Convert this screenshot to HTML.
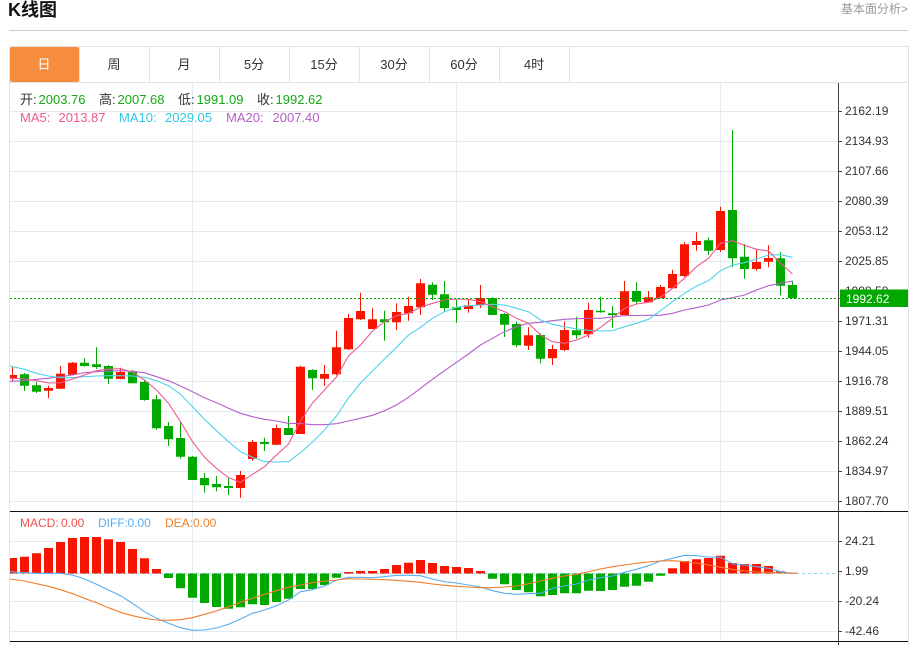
<!DOCTYPE html>
<html><head><meta charset="utf-8"><title>K线图</title>
<style>
html,body{margin:0;padding:0;background:#fff;width:917px;height:645px;overflow:hidden}
svg{display:block}
text{font-family:"Liberation Sans","Noto Sans CJK SC",sans-serif}
</style></head><body>
<svg width="917" height="645" viewBox="0 0 917 645" xmlns="http://www.w3.org/2000/svg">
<defs><clipPath id="c"><rect x="10" y="83" width="828" height="562"/></clipPath></defs>
<text x="8" y="16" font-size="18" font-weight="700" fill="#111">K线图</text>
<text x="841" y="13" font-size="12" fill="#999">基本面分析&gt;</text>
<rect x="9" y="30" width="899" height="1" fill="#ccc"/>
<!-- frame -->
<rect x="9" y="46" width="1" height="599" fill="#e2e2e2"/>
<rect x="908" y="46" width="1" height="599" fill="#e2e2e2"/>
<rect x="9" y="46" width="900" height="1" fill="#e2e2e2"/>
<rect x="9" y="82" width="900" height="1" fill="#e2e2e2"/>
<!-- tabs -->
<rect x="10" y="47" width="69" height="35" rx="2" fill="#f68c3e"/>
<g fill="#e2e2e2"><rect x="79" y="47" width="1" height="35"/><rect x="149" y="47" width="1" height="35"/><rect x="219" y="47" width="1" height="35"/><rect x="289" y="47" width="1" height="35"/><rect x="359" y="47" width="1" height="35"/><rect x="429" y="47" width="1" height="35"/><rect x="499" y="47" width="1" height="35"/><rect x="569" y="47" width="1" height="35"/></g>
<g font-size="13" fill="#333" text-anchor="middle">
<text x="44" y="69" fill="#fff">日</text><text x="114" y="69">周</text><text x="184" y="69">月</text><text x="254" y="69">5分</text><text x="324" y="69">15分</text><text x="394" y="69">30分</text><text x="464" y="69">60分</text><text x="534" y="69">4时</text>
</g>
<!-- grid -->
<g stroke="#e3ebf2" stroke-width="1" fill="none">
<path d="M10 111.5H838M10 141.5H838M10 171.5H838M10 201.5H838M10 231.5H838M10 261.5H838M10 291.5H838M10 321.5H838M10 351.5H838M10 381.5H838M10 411.5H838M10 441.5H838M10 471.5H838M10 501.5H838M10 541.5H838M10 601.5H838M10 631.5H838"/>
<path d="M192.5 83V641M456.5 83V641M720.5 83V641"/>
</g>
<path d="M10 573.5H838" stroke="#8fd8ee" stroke-width="1" stroke-dasharray="3 3" fill="none"/>
<g clip-path="url(#c)">
<!-- red candles -->
<path fill="none" stroke="#f61500" stroke-width="1" d="M12.5 367V381M48.5 385.7V398.3M60.5 366V389M72.5 362V375M120.5 367.7V379.3M240.5 471V497.7M252.5 440V460.7M276.5 424.7V445.3M300.5 365.7V434M324.5 365V386M336.5 330.7V375.3M348.5 314V350M360.5 292.7V320M372.5 308.3V329M396.5 303.3V330M408.5 296.7V320.7M420.5 279V315M468.5 300V312.7M480.5 285V308M528.5 327.3V350M552.5 345V365M564.5 321.7V351.3M588.5 302.7V337.7M624.5 281V315M648.5 291V302.3M660.5 285V298.3M672.5 269.7V288.3M684.5 242V277.3M696.5 232.3V250.7M720.5 206.7V252M756.5 250V270.7M768.5 245.3V267.3"/>
<path fill="#f61500" d="M8 375h9V378.7h-9zM44 388h9V390.7h-9zM56 373.7h9V388.7h-9zM68 362.7h9V374.7h-9zM116 372h9V379h-9zM236 475h9V488h-9zM248 442h9V459h-9zM272 428h9V444.7h-9zM296 366.7h9V434h-9zM320 374h9V378.7h-9zM332 347.3h9V374.3h-9zM344 318h9V349.3h-9zM356 311h9V319.3h-9zM368 319.3h9V329h-9zM392 312h9V322.3h-9zM404 306h9V313.3h-9zM416 283.3h9V307.3h-9zM464 305.3h9V309h-9zM476 298h9V305.3h-9zM524 335.3h9V345.7h-9zM548 349h9V358.3h-9zM560 330h9V350h-9zM584 310h9V334.3h-9zM620 291.3h9V315h-9zM644 297.3h9V302.3h-9zM656 287h9V298.3h-9zM668 274h9V288.3h-9zM680 244.3h9V276h-9zM692 241h9V245h-9zM716 211h9V250h-9zM752 262h9V269h-9zM764 258h9V261.7h-9z"/>
<!-- green candles -->
<path fill="none" stroke="#00a800" stroke-width="1" d="M24.5 372.7V391M36.5 382V393M84.5 358.3V366.7M96.5 347.3V369M108.5 365V384M132.5 370V383.3M144.5 380V400.7M156.5 395V429.7M168.5 422V446M180.5 421V458.7M192.5 456V480M204.5 473V492.7M216.5 476V491.3M228.5 478.3V495M264.5 437.7V451M288.5 416V435M312.5 369.3V390M384.5 310.7V340.7M432.5 282.3V300M444.5 281V311.7M456.5 300V322.7M492.5 297V315M504.5 313V337M516.5 321.7V347.3M540.5 333.3V363.3M576.5 316.7V338.7M600.5 296.7V312.7M612.5 306V327.7M636.5 282.3V304M708.5 237.3V255M732.5 130V267.3M744.5 244V278.7M780.5 252V295.3M792.5 281V298.3"/>
<path fill="#00a800" d="M20 374.3h9V385.7h-9zM32 385.3h9V391.7h-9zM80 362.7h9V366h-9zM92 364.3h9V367h-9zM104 366h9V378.7h-9zM128 372h9V383.3h-9zM140 382h9V400h-9zM152 399.3h9V428.3h-9zM164 426h9V439.3h-9zM176 438h9V456.7h-9zM188 456.7h9V480h-9zM200 478h9V485.3h-9zM212 484h9V487.3h-9zM224 486h9V488h-9zM260 442h9V444h-9zM284 428h9V435h-9zM308 370h9V378.3h-9zM380 319.3h9V322.3h-9zM428 284.7h9V294.7h-9zM440 294.3h9V308h-9zM452 307.3h9V310h-9zM488 298h9V315h-9zM500 314h9V324.7h-9zM512 324h9V345.3h-9zM536 335h9V358.7h-9zM572 330.3h9V335.3h-9zM596 310.7h9V312.3h-9zM608 313.3h9V315h-9zM632 291h9V301.7h-9zM704 240.3h9V250.7h-9zM728 210h9V258.3h-9zM740 256.7h9V269h-9zM776 258.3h9V285.7h-9zM788 285h9V298.3h-9z"/>
<!-- MACD bars red -->
<path fill="#f61500" d="M8 558h9V573.5h-9zM20 556.7h9V573.5h-9zM32 553.3h9V573.5h-9zM44 548h9V573.5h-9zM56 542h9V573.5h-9zM68 538h9V573.5h-9zM80 537h9V573.5h-9zM92 537h9V573.5h-9zM104 539.3h9V573.5h-9zM116 542h9V573.5h-9zM128 549h9V573.5h-9zM140 558.3h9V573.5h-9zM152 569h9V573.5h-9zM344 572h9V573.5h-9zM356 571h9V573.5h-9zM368 571h9V573.5h-9zM380 569h9V573.5h-9zM392 565h9V573.5h-9zM404 562.7h9V573.5h-9zM416 560h9V573.5h-9zM428 563h9V573.5h-9zM440 566h9V573.5h-9zM452 567h9V573.5h-9zM464 568h9V573.5h-9zM476 571h9V573.5h-9zM668 568.3h9V573.5h-9zM680 561h9V573.5h-9zM692 559.3h9V573.5h-9zM704 558h9V573.5h-9zM716 555.7h9V573.5h-9zM728 563h9V573.5h-9zM740 564h9V573.5h-9zM752 564h9V573.5h-9zM764 566h9V573.5h-9zM776 571.3h9V573.5h-9zM788 572.7h9V573.5h-9z"/>
<!-- MACD bars green -->
<path fill="#00a800" d="M164 573.5h9V578h-9zM176 573.5h9V588.3h-9zM188 573.5h9V597.7h-9zM200 573.5h9V603h-9zM212 573.5h9V607h-9zM224 573.5h9V608.7h-9zM236 573.5h9V607.3h-9zM248 573.5h9V604.3h-9zM260 573.5h9V605h-9zM272 573.5h9V602h-9zM284 573.5h9V598.7h-9zM296 573.5h9V589h-9zM308 573.5h9V589h-9zM320 573.5h9V585h-9zM332 573.5h9V577.7h-9zM488 573.5h9V578.7h-9zM500 573.5h9V584.3h-9zM512 573.5h9V590h-9zM524 573.5h9V592.3h-9zM536 573.5h9V596.3h-9zM548 573.5h9V595h-9zM560 573.5h9V593.3h-9zM572 573.5h9V593.3h-9zM584 573.5h9V590.7h-9zM596 573.5h9V591h-9zM608 573.5h9V590h-9zM620 573.5h9V586.7h-9zM632 573.5h9V585.7h-9zM644 573.5h9V581.7h-9zM656 573.5h9V575.7h-9z"/>
<!-- MA lines -->
<polyline fill="none" stroke="#b45fc8" stroke-width="1.1" points="10,381.3 24.5,380.7 36.5,379.3 48.5,378.3 60.5,376.7 72.5,375 84.5,372.7 96.5,371.7 108.5,371 120.5,370.7 132.5,371.3 144.5,372.7 156.5,376.7 168.5,380.7 180.5,386 192.5,391.7 204.5,397.7 216.5,402.7 228.5,408.3 240.5,413.3 252.5,416.7 264.5,419.3 276.5,421 288.5,423.3 300.5,423.6 312.5,424.7 324.5,424.7 336.5,423.7 348.5,421 360.5,418.3 372.5,415.3 384.5,410.7 396.5,405 408.5,397.3 420.5,388.3 432.5,379.3 444.5,370.7 456.5,362.3 468.5,354 480.5,345 492.5,338.3 504.5,331.7 516.5,326.7 528.5,323.3 540.5,322.3 552.5,320.7 564.5,319.3 576.5,318.7 588.5,318.3 600.5,318.3 612.5,317 624.5,315.7 636.5,315.5 648.5,315.3 660.5,315.3 672.5,313.3 684.5,310 696.5,307.7 708.5,305 720.5,300 732.5,297.7 744.5,295 756.5,290 768.5,285.7 780.5,283.3 792.5,281"/>
<polyline fill="none" stroke="#4fd3e8" stroke-width="1.1" points="10,366 24.5,369.3 36.5,373.3 48.5,376 60.5,377.7 72.5,377.7 84.5,376.7 96.5,376 108.5,375.7 120.5,375.7 132.5,376 144.5,377.3 156.5,380.7 168.5,385.7 180.5,394.3 192.5,406.7 204.5,419.3 216.5,430.7 228.5,441.7 240.5,451.7 252.5,457.3 264.5,461.7 276.5,462 288.5,461.7 300.5,452.7 312.5,442 324.5,430 336.5,416 348.5,398 360.5,383 372.5,371 384.5,359 396.5,347.3 408.5,335 420.5,327.3 432.5,318.3 444.5,311.7 456.5,307.3 468.5,305.7 480.5,305 492.5,304.3 504.5,305 516.5,308.3 528.5,311.7 540.5,320 552.5,324.3 564.5,326.7 576.5,329 588.5,330.3 600.5,331 612.5,330.7 624.5,326.7 636.5,323.3 648.5,319.3 660.5,310.7 672.5,301.7 684.5,293.3 696.5,286 708.5,280.7 720.5,270.7 732.5,265 744.5,262.7 756.5,259 768.5,255 780.5,254.7 792.5,257.3"/>
<polyline fill="none" stroke="#ec5a8f" stroke-width="1.1" points="10,378 24.5,379 36.5,380.7 48.5,383 60.5,382.7 72.5,379 84.5,375 96.5,370.7 108.5,369 120.5,368.7 132.5,372 144.5,380 156.5,390 168.5,403.3 180.5,421.7 192.5,441.7 204.5,457.3 216.5,468.3 228.5,477.7 240.5,482.3 252.5,474.3 264.5,466.7 276.5,455 288.5,444 300.5,421 312.5,403 324.5,390 336.5,377 348.5,356 360.5,345 372.5,331 384.5,321.7 396.5,315.7 408.5,313.3 420.5,307.3 432.5,303.3 444.5,300 456.5,299 468.5,299.3 480.5,301.7 492.5,306.7 504.5,311.7 516.5,318.3 528.5,323.3 540.5,335 552.5,341.7 564.5,343.3 576.5,340 588.5,335 600.5,327.3 612.5,318.3 624.5,308.3 636.5,304 648.5,302.3 660.5,297.3 672.5,288.3 684.5,278.3 696.5,266.7 708.5,258.3 720.5,243.3 732.5,240.7 744.5,245.3 756.5,249.3 768.5,251 780.5,263.3 792.5,274"/>
<!-- DEA / DIFF -->
<polyline fill="none" stroke="#5aaef0" stroke-width="1.1" points="10,571.7 24.5,572.7 36.5,573.3 48.5,573.3 60.5,573.3 72.5,575 84.5,579 96.5,584.3 108.5,590 120.5,595.7 132.5,603.3 144.5,611.7 156.5,618.3 168.5,623.3 180.5,627.7 192.5,630.3 204.5,630 216.5,628 228.5,624.3 240.5,619 252.5,613.3 264.5,610 276.5,605.7 288.5,600 300.5,591.7 312.5,589.7 324.5,586 336.5,580.3 348.5,577.3 360.5,577.3 372.5,577.7 384.5,576.7 396.5,575.3 408.5,575.3 420.5,575.7 432.5,579 444.5,581.7 456.5,583 468.5,585 480.5,587 492.5,590.7 504.5,593.3 516.5,594.3 528.5,593.7 540.5,593.3 552.5,588.3 564.5,586 576.5,584 588.5,580 600.5,577.7 612.5,576 624.5,572.3 636.5,569.3 648.5,565.7 660.5,561 672.5,558.3 684.5,555.3 696.5,555.7 708.5,557 720.5,557.3 732.5,563.7 744.5,565 756.5,566.7 768.5,568.3 780.5,571.7 792.5,573.3"/>
<polyline fill="none" stroke="#f07d2c" stroke-width="1.1" points="10,579 24.5,581 36.5,583.7 48.5,586.3 60.5,589.7 72.5,593.7 84.5,598.3 96.5,602.7 108.5,607.7 120.5,612.3 132.5,615.7 144.5,618.3 156.5,620 168.5,620.3 180.5,619.7 192.5,617.7 204.5,614.3 216.5,611 228.5,606.7 240.5,602.3 252.5,598.3 264.5,594.3 276.5,590.7 288.5,587.3 300.5,585 312.5,582.7 324.5,581 336.5,580 348.5,578.7 360.5,579 372.5,579.3 384.5,579.7 396.5,580.3 408.5,581.3 420.5,582.3 432.5,584 444.5,585.3 456.5,586.3 468.5,587 480.5,587.7 492.5,587.7 504.5,587 516.5,586 528.5,583.7 540.5,581 552.5,578.3 564.5,576 576.5,574.3 588.5,571.7 600.5,569 612.5,566.7 624.5,565 636.5,563.3 648.5,562 660.5,561 672.5,560.7 684.5,561.7 696.5,563 708.5,565 720.5,567.3 732.5,569.3 744.5,571 756.5,572 768.5,572.3 780.5,573 792.5,573.3"/>
</g>
<!-- last price dotted -->
<path d="M10 298.5H840" stroke="#00a800" stroke-width="1" stroke-dasharray="2 2" fill="none"/>
<!-- axis -->
<rect x="10" y="511" width="898" height="1" fill="#111"/>
<rect x="10" y="641" width="898" height="1" fill="#111"/>
<rect x="838" y="83" width="1" height="562" fill="#444"/>
<path d="M839 111.5h3M839 141.5h3M839 171.5h3M839 201.5h3M839 231.5h3M839 261.5h3M839 321.5h3M839 351.5h3M839 381.5h3M839 411.5h3M839 441.5h3M839 471.5h3M839 501.5h3M839 541.5h3M839 571.5h3M839 601.5h3M839 631.5h3" stroke="#444" stroke-width="1" fill="none"/>
<g font-size="12" fill="#333">
<text x="845" y="115">2162.19</text><text x="845" y="145">2134.93</text><text x="845" y="175">2107.66</text><text x="845" y="205">2080.39</text><text x="845" y="235">2053.12</text><text x="845" y="265">2025.85</text><text x="845" y="295">1998.58</text><text x="845" y="325">1971.31</text><text x="845" y="355">1944.05</text><text x="845" y="385">1916.78</text><text x="845" y="415">1889.51</text><text x="845" y="445">1862.24</text><text x="845" y="475">1834.97</text><text x="845" y="505">1807.70</text>
<text x="845" y="545">24.21</text><text x="845" y="575">1.99</text><text x="845" y="605">-20.24</text><text x="845" y="635">-42.46</text>
</g>
<rect x="840" y="289.5" width="68" height="17.5" fill="#00a800"/>
<text x="846" y="303" font-size="12" fill="#fff">1992.62</text>
<!-- legend -->
<g font-size="13">
<text x="20" y="104" fill="#333">开:</text><text x="38.5" y="104" fill="#14a814">2003.76</text>
<text x="99" y="104" fill="#333">高:</text><text x="117.5" y="104" fill="#14a814">2007.68</text>
<text x="178" y="104" fill="#333">低:</text><text x="196.5" y="104" fill="#14a814">1991.09</text>
<text x="257" y="104" fill="#333">收:</text><text x="275.5" y="104" fill="#14a814">1992.62</text>
<text x="20" y="122" fill="#ec5a8f">MA5:</text><text x="58.5" y="122" fill="#ec5a8f">2013.87</text>
<text x="119" y="122" fill="#2fc9e3">MA10:</text><text x="165" y="122" fill="#2fc9e3">2029.05</text>
<text x="226" y="122" fill="#b55fc8">MA20:</text><text x="272.5" y="122" fill="#b55fc8">2007.40</text>
</g>
<g font-size="12">
<text x="20" y="527" fill="#f05050">MACD:</text><text x="61" y="527" fill="#f05050">0.00</text>
<text x="98" y="527" fill="#5aaef0">DIFF:</text><text x="127.5" y="527" fill="#5aaef0">0.00</text>
<text x="165" y="527" fill="#f08030">DEA:</text><text x="193" y="527" fill="#f08030">0.00</text>
</g>
</svg>
</body></html>
